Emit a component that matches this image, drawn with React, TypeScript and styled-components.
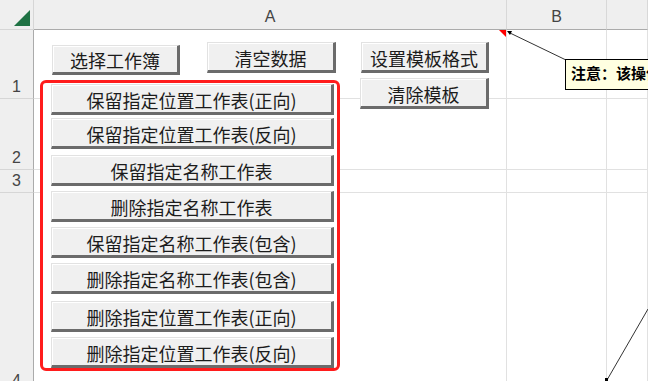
import React from 'react';
import styled, { createGlobalStyle } from 'styled-components';

const GlobalStyle = createGlobalStyle`
  html, body {
    margin: 0;
    padding: 0;
    background: #ffffff;
  }
`;

const Viewport = styled.div`
  position: relative;
  width: 648px;
  height: 381px;
  overflow: hidden;
  background: #ffffff;
`;

const Grid = styled.div`
  display: grid;
  grid-template-columns: 34px 473px 100px 1fr;
  grid-template-rows: 30px 69px 71px 23px 200px;
`;

const Corner = styled.div`
  box-sizing: border-box;
  position: relative;
  background: #efefef;
  border-right: 1px solid #d6d6d6;
  border-bottom: 1px solid #d6d6d6;
  display: flex;
  align-items: flex-end;
  justify-content: flex-end;
  padding: 0 3px 3px 0;
`;

const ColHead = styled.div`
  box-sizing: border-box;
  background: #efefef;
  border-right: 1px solid #d8d8d8;
  border-bottom: 1px solid #ababab;
  display: flex;
  align-items: flex-end;
  justify-content: center;
  padding-bottom: 3px;
  font: 16px 'Liberation Sans', Arial, sans-serif;
  color: #444444;
`;

const RowHead = styled.div`
  box-sizing: border-box;
  background: #efefef;
  border-right: 1px solid #ababab;
  border-bottom: 1px solid #d6d6d6;
  display: flex;
  align-items: flex-end;
  justify-content: center;
  padding-bottom: 2px;
  font: 16px 'Liberation Sans', Arial, sans-serif;
  color: #444444;
`;

const Cell = styled.div`
  box-sizing: border-box;
  border-right: 1px solid #e1e1e1;
  border-bottom: 1px solid #e1e1e1;
`;

const Layer = styled.div`
  position: absolute;
  inset: 0;
`;

const FormButton = styled.button<{ $mt?: number }>`
  box-sizing: border-box;
  width: 283px;
  height: 31px;
  margin: ${(p) => p.$mt ?? 0}px 0 0;
  padding: 2px 0 0;
  background: #f0f0f0;
  border-style: solid;
  border-width: 1px 3px 3px 1px;
  border-color: #e2e2e2 #6b6b6b #6b6b6b #e2e2e2;
  box-shadow: inset 1px 1px 0 #ffffff;
  display: flex;
  align-items: center;
  justify-content: center;
  font: 18px 'Noto Sans CJK SC', 'Noto Sans', sans-serif;
  line-height: 1;
  color: #1c1c1c;
  white-space: nowrap;
`;

// form controls float freely on the sheet, at their own coordinates
const FloatButton = styled(FormButton)<{ $x: number; $y: number; $w: number; $h: number }>`
  position: absolute;
  left: ${(p) => p.$x}px;
  top: ${(p) => p.$y}px;
  width: ${(p) => p.$w}px;
  height: ${(p) => p.$h}px;
`;

const RedFrame = styled.div`
  position: absolute;
  left: 40px;
  top: 80px;
  box-sizing: border-box;
  width: 300px;
  height: 291px;
  border: 3px solid #ff1c1c;
  border-radius: 6px;
  background: #ffffff;
  padding: 1px 0 0 8px;
  display: flex;
  flex-direction: column;
`;

const CommentBox = styled.div`
  position: absolute;
  left: 565px;
  top: 59px;
  width: 220px;
  height: 31px;
  box-sizing: border-box;
  border: 1px solid #000000;
  background: #ffffe1;
  padding: 2px 0 0 5px;
  font: bold 15px 'Noto Sans CJK SC', sans-serif;
  color: #000000;
  white-space: nowrap;
  overflow: hidden;
`;

const Lines = styled.svg`
  position: absolute;
  left: 0;
  top: 0;
  pointer-events: none;
`;

const framed = [
  { label: '保留指定位置工作表(正向)', mt: 0 },
  { label: '保留指定位置工作表(反向)', mt: 3 },
  { label: '保留指定名称工作表', mt: 6 },
  { label: '删除指定名称工作表', mt: 5 },
  { label: '保留指定名称工作表(包含)', mt: 5 },
  { label: '删除指定名称工作表(包含)', mt: 5 },
  { label: '删除指定位置工作表(正向)', mt: 7 },
  { label: '删除指定位置工作表(反向)', mt: 5 },
];

const rows = [
  { n: '1' },
  { n: '2' },
  { n: '3' },
  { n: '4' },
];

export default function App() {
  return (
    <Viewport>
      <GlobalStyle />
      <Grid>
        <Corner>
          <svg width="16" height="16" viewBox="0 0 16 16">
            <polygon points="16,0 16,16 0,16" fill="#1f7244" />
          </svg>
        </Corner>
        <ColHead>A</ColHead>
        <ColHead>B</ColHead>
        <ColHead />
        {rows.map((r) => (
          <React.Fragment key={r.n}>
            <RowHead>{r.n}</RowHead>
            <Cell />
            <Cell />
            <Cell />
          </React.Fragment>
        ))}
      </Grid>

      <Layer>
        <FloatButton $x={52} $y={45} $w={128} $h={30}>选择工作簿</FloatButton>
        <FloatButton $x={207} $y={42} $w={129} $h={31}>清空数据</FloatButton>
        <FloatButton $x={361} $y={42} $w={128} $h={31}>设置模板格式</FloatButton>
        <FloatButton $x={360} $y={78} $w={129} $h={31}>清除模板</FloatButton>

        <RedFrame>
          {framed.map((b) => (
            <FormButton key={b.label} $mt={b.mt}>
              {b.label}
            </FormButton>
          ))}
        </RedFrame>

        <Lines width="648" height="381" viewBox="0 0 648 381">
          <polygon points="499,30 506,30 506,37" fill="#ff0000" />
          <line x1="510" y1="33" x2="566" y2="60" stroke="#333" strokeWidth="1" />
          <polygon points="507,31 512,31 510,35" fill="#000" />
          <line x1="607" y1="380" x2="648" y2="309" stroke="#333" strokeWidth="1" />
          <rect x="605" y="378" width="3" height="3" fill="#000" />
        </Lines>

        <CommentBox>注意：该操作不可撤销</CommentBox>
      </Layer>
    </Viewport>
  );
}
